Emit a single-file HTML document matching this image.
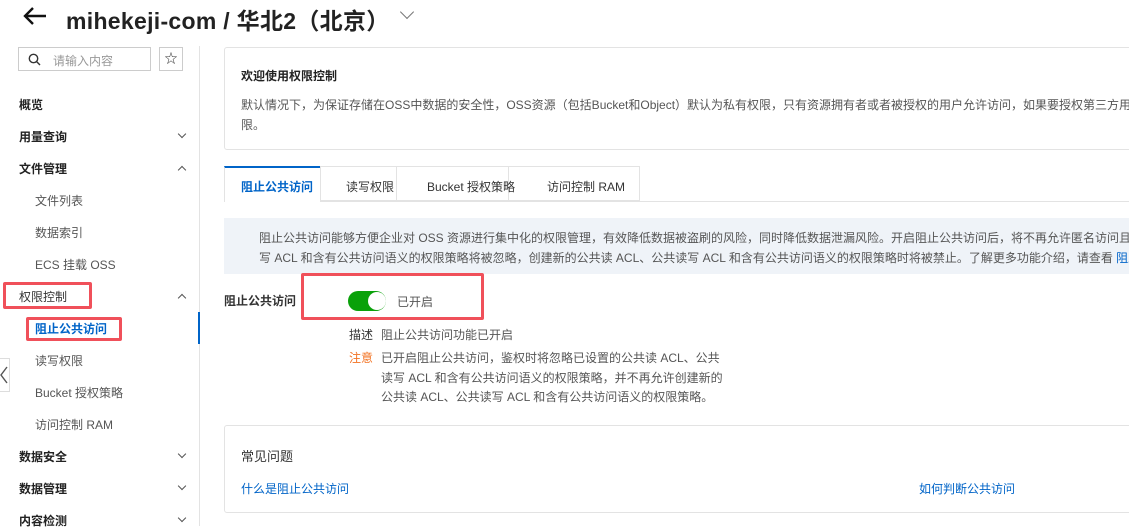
<!DOCTYPE html>
<html><head><meta charset="utf-8"><style>
*{margin:0;padding:0;box-sizing:border-box}
body{width:1129px;height:526px;overflow:hidden;background:#fff;font-family:"Liberation Sans","Noto Sans CJK SC",sans-serif;color:#333;font-size:12px;position:relative}
.a{position:absolute;white-space:nowrap}
.b{font-weight:bold;color:#222}
.chev{position:absolute;width:6px;height:6px;border-right:1.2px solid #555;border-bottom:1.2px solid #555}
.dn{transform:rotate(45deg)}
.up{transform:rotate(-135deg)}
.red{position:absolute;border:3px solid #f0505a;border-radius:2px}
.g{color:#555}
</style></head><body>
<svg class="a" style="left:22px;top:6px" width="26" height="20" viewBox="0 0 26 20"><path d="M24 10H3M11 2L3 10L11 18" fill="none" stroke="#111" stroke-width="2.4"/></svg>
<div class="a" style="left:66px;top:2px;font-size:23px;font-weight:bold;color:#222;letter-spacing:0.3px">mihekeji-com / 华北2（北京）</div>
<div class="chev dn" style="left:402px;top:7px;width:10px;height:10px;border-color:#777"></div>

<div class="a" style="left:18px;top:47px;width:133px;height:24px;border:1px solid #ccc"></div>
<svg class="a" style="left:28px;top:53px" width="13" height="13"><circle cx="5.5" cy="5.5" r="4.2" fill="none" stroke="#333" stroke-width="1.4"/><path d="M8.5 8.5L12 12" stroke="#333" stroke-width="1.4"/></svg>
<div class="a" style="left:53px;top:52px;color:#999">请输入内容</div>
<div class="a" style="left:159px;top:47px;width:24px;height:24px;border:1px solid #ccc;text-align:center;line-height:22px;font-size:13px">☆</div>
<div class="a" style="left:199px;top:46px;width:1px;height:480px;background:#e3e3e3"></div>
<div class="a" style="left:198px;top:312px;width:2px;height:32px;background:#0064c8"></div>

<div class="a b" style="left:19px;top:96px">概览</div>
<div class="a b" style="left:19px;top:128px">用量查询</div><div class="chev dn" style="left:179px;top:131px"></div>
<div class="a b" style="left:19px;top:160px">文件管理</div><div class="chev up" style="left:179px;top:167px"></div>
<div class="a g" style="left:35px;top:192px">文件列表</div>
<div class="a g" style="left:35px;top:224px">数据索引</div>
<div class="a g" style="left:35px;top:256px">ECS 挂载 OSS</div>
<div class="a b" style="left:19px;top:288px;font-weight:normal;color:#333">权限控制</div><div class="chev up" style="left:179px;top:295px"></div>
<div class="red" style="left:3px;top:282px;width:89px;height:27px"></div>
<div class="a" style="left:35px;top:320px;color:#0064c8;font-weight:bold">阻止公共访问</div>
<div class="red" style="left:26px;top:317px;width:96px;height:24px"></div>
<div class="a g" style="left:35px;top:352px">读写权限</div>
<div class="a g" style="left:35px;top:384px">Bucket 授权策略</div>
<div class="a g" style="left:35px;top:416px">访问控制 RAM</div>
<div class="a b" style="left:19px;top:448px">数据安全</div><div class="chev dn" style="left:179px;top:451px"></div>
<div class="a b" style="left:19px;top:480px">数据管理</div><div class="chev dn" style="left:179px;top:483px"></div>
<div class="a b" style="left:19px;top:512px">内容检测</div><div class="chev dn" style="left:179px;top:515px"></div>
<div class="a" style="left:-4px;top:358px;width:14px;height:34px;border:1px solid #ddd;background:#fff"></div>
<svg class="a" style="left:0;top:366px" width="8" height="18"><path d="M7 1L1 9L7 17" fill="none" stroke="#555" stroke-width="1.4"/></svg>

<div class="a" style="left:224px;top:47px;width:920px;height:103px;border:1px solid #e3e3e3;border-radius:3px"></div>
<div class="a b" style="left:241px;top:67px">欢迎使用权限控制</div>
<div class="a g" style="left:241px;top:96px">默认情况下，为保证存储在OSS中数据的安全性，OSS资源（包括Bucket和Object）默认为私有权限，只有资源拥有者或者被授权的用户允许访问，如果要授权第三方用户访问</div>
<div class="a g" style="left:241px;top:116px">限。</div>

<div class="a" style="left:224px;top:201px;width:905px;height:1px;background:#e3e3e3"></div>
<div class="a" style="left:224px;top:166px;width:97px;height:36px;border:1px solid #e3e3e3;border-top:2px solid #0064c8;border-bottom:none;background:#fff"></div>
<div class="a" style="left:320px;top:166px;width:77px;height:35px;border:1px solid #e3e3e3"></div>
<div class="a" style="left:396px;top:166px;width:113px;height:35px;border:1px solid #e3e3e3"></div>
<div class="a" style="left:508px;top:166px;width:132px;height:35px;border:1px solid #e3e3e3"></div>
<div class="a" style="left:241px;top:178px;color:#0064c8;font-weight:bold">阻止公共访问</div>
<div class="a" style="left:346px;top:178px">读写权限</div>
<div class="a" style="left:427px;top:178px">Bucket 授权策略</div>
<div class="a" style="left:547px;top:178px">访问控制 RAM</div>

<div class="a" style="left:224px;top:218px;width:905px;height:56px;background:#eff3f8"></div>
<div class="a g" style="left:259px;top:229px">阻止公共访问能够方便企业对 OSS 资源进行集中化的权限管理，有效降低数据被盗刷的风险，同时降低数据泄漏风险。开启阻止公共访问后，将不再允许匿名访问且</div>
<div class="a g" style="left:259px;top:249px">写 ACL 和含有公共访问语义的权限策略将被忽略，创建新的公共读 ACL、公共读写 ACL 和含有公共访问语义的权限策略时将被禁止。了解更多功能介绍，请查看 <span style="color:#0064c8">阻止</span></div>

<div class="a b" style="left:224px;top:292px;font-weight:bold;color:#333">阻止公共访问</div>
<div class="red" style="left:301px;top:273px;width:183px;height:47px"></div>
<div class="a" style="left:348px;top:291px;width:38px;height:20px;border-radius:10px;background:#0aa10a"></div>
<div class="a" style="left:368px;top:292px;width:18px;height:18px;border-radius:50%;background:#fff"></div>
<div class="a g" style="left:397px;top:293px">已开启</div>
<div class="a" style="left:349px;top:326px">描述</div>
<div class="a g" style="left:381px;top:326px">阻止公共访问功能已开启</div>
<div class="a" style="left:349px;top:349px;color:#f27222">注意</div>
<div class="a g" style="left:381px;top:349px;line-height:19.5px">已开启阻止公共访问，鉴权时将忽略已设置的公共读 ACL、公共<br>读写 ACL 和含有公共访问语义的权限策略，并不再允许创建新的<br>公共读 ACL、公共读写 ACL 和含有公共访问语义的权限策略。</div>

<div class="a" style="left:224px;top:425px;width:920px;height:88px;border:1px solid #e3e3e3;border-radius:3px"></div>
<div class="a" style="left:241px;top:446px;font-size:13px;color:#333">常见问题</div>
<div class="a" style="left:241px;top:480px;color:#0064c8">什么是阻止公共访问</div>
<div class="a" style="left:919px;top:480px;color:#0064c8">如何判断公共访问</div>
</body></html>
